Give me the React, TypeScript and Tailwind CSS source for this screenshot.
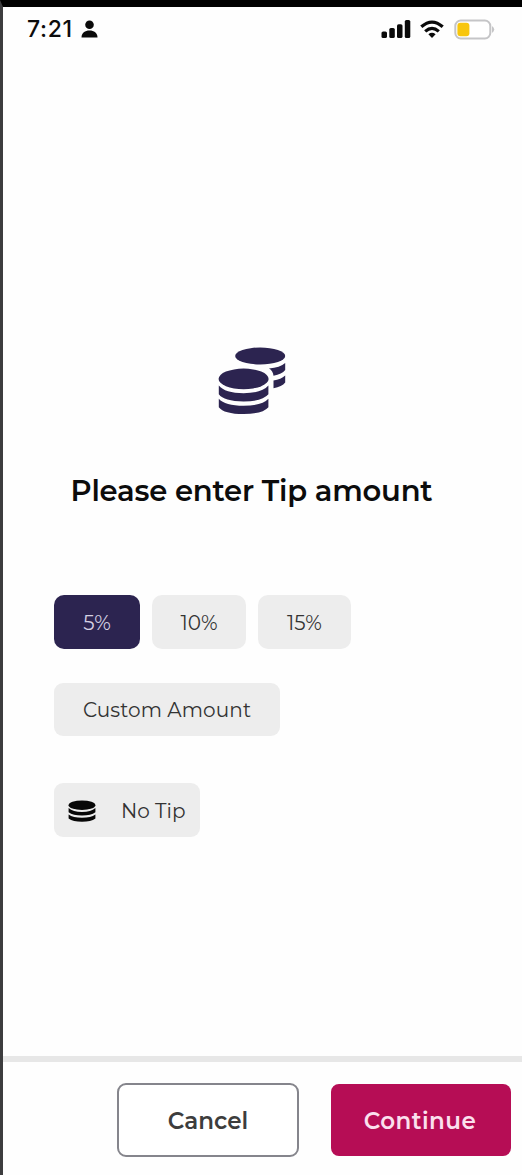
import { useState } from "react";

const CoinsIcon = () => (
  <svg viewBox="0 0 68 68" className="w-[68px] h-[68px]" fill="#2c2450">
    <ellipse cx="42.2" cy="9" rx="25" ry="8.5" />
    <path d="M51 21.6 Q62 20.6 67.2 16 V23 Q64 27.2 55.5 28.8 Q55 24 51 21.6Z" />
    <path d="M55.5 33.6 Q63 32.6 67.2 28.6 V35.5 Q64 39.6 55.5 41.2Z" />
    <ellipse cx="25.6" cy="31.9" rx="25" ry="10.3" />
    <path d="M0.8 38.6 Q7 46.2 25.6 46.2 Q44 46.2 50.4 38.6 V47.3 Q44.5 54.4 25.6 54.4 Q6 54.4 0.8 47.3Z" />
    <path d="M0.8 51.8 Q7 58.8 25.6 58.8 Q44 58.8 50.4 51.8 V60.2 Q44.5 67 25.6 67 Q6 67 0.8 60.2Z" />
  </svg>
);

const StackIcon = () => (
  <svg viewBox="0 0 28 22" className="w-7 h-[22px]" fill="#080808">
    <ellipse cx="14" cy="5.2" rx="13.4" ry="4.8" />
    <path d="M0.6 8 Q5 12 14 12 Q23 12 27.4 8 V12.2 Q23 15.5 14 15.5 Q5 15.5 0.6 12.2Z" />
    <path d="M0.6 14.6 Q5 17.8 14 17.8 Q23 17.8 27.4 14.6 V18.6 Q23 21.8 14 21.8 Q5 21.8 0.6 18.6Z" />
  </svg>
);

const StatusBar = () => (
  <div className="flex justify-between h-11 pl-6 pr-[26px] pt-[9px]">
    <div className="flex items-center h-[26px] gap-[7px]">
      <span className="font-['Inter',sans-serif] text-[23px] leading-[26px] font-medium tracking-[0.7px] w-[47px] whitespace-nowrap">7:21</span>
      <svg viewBox="0 0 17 18" className="w-[17px] h-[18px]" fill="#0a0a0a">
        <circle cx="8.5" cy="4.7" r="4.3" />
        <path d="M0.5 17.4 C0.5 12.8 4 10.5 8.5 10.5 S16.5 12.8 16.5 17.4Z" />
      </svg>
    </div>
    <div className="flex items-center h-[26px]">
      <svg viewBox="0 0 30 20" className="w-[30px] h-5" fill="#0a0a0a">
        <rect x="0.5" y="12.5" width="5.5" height="6.5" rx="1.6" />
        <rect x="8.3" y="9" width="5.5" height="10" rx="1.6" />
        <rect x="16" y="5.2" width="5.5" height="13.8" rx="1.6" />
        <rect x="23.8" y="1" width="5.5" height="18" rx="1.6" />
      </svg>
      <svg viewBox="0 0 24 18" className="w-6 h-[18px] ml-[9px]" fill="none" stroke="#0a0a0a" strokeWidth="3.2">
        <path d="M1.3 6.8 Q12 -2.6 22.7 6.8" />
        <path d="M5.2 11.4 Q12 5.4 18.8 11.4" />
        <path d="M12 18 L8.4 14.2 Q12 11.4 15.6 14.2Z" fill="#0a0a0a" stroke="none" />
      </svg>
      <svg viewBox="0 0 42 21" className="w-[42px] h-[21px] ml-2.5">
        <rect x="1.3" y="1.5" width="35" height="18" rx="5.5" fill="#fff" stroke="#c5c5c7" strokeWidth="2" />
        <rect x="3.4" y="3.8" width="12" height="13.4" rx="3" fill="#f8c60d" />
        <path d="M38 7 Q42.5 10.5 38 14Z" fill="#c5c5c7" />
      </svg>
    </div>
  </div>
);

const tips = [
  { label: "5%", width: "w-[86px]" },
  { label: "10%", width: "w-[94px]" },
  { label: "15%", width: "w-[93px]" },
];

export default function App() {
  const [selected, setSelected] = useState("5%");

  const chipColor = (label: string) =>
    selected === label ? "bg-[#2c2450] text-[#d5d1e3]" : "bg-[#ededed] text-[#333333]";

  return (
    <div className="flex flex-col w-[522px] h-[1175px] overflow-hidden bg-[#fefefe] border-t-[7px] border-t-black border-l-[3px] border-l-[#3c3c3e] font-['Montserrat','Inter',sans-serif] text-[#0c0c0c]">
      <StatusBar />

      <main className="flex flex-col h-[1005px] pt-[296px]">
        <div className="flex flex-col items-center pr-[22px]">
          <CoinsIcon />
          <h1 className="mt-[57px] text-[29px] leading-[38px] font-semibold tracking-[-0.18px] whitespace-nowrap">Please enter Tip amount</h1>
        </div>

        <div className="flex flex-col items-start mt-[85px] pl-[51px] text-[20px]">
          <div className="flex gap-3">
            {tips.map((tip) => (
              <button
                key={tip.label}
                onClick={() => setSelected(tip.label)}
                className={`${tip.width} h-[54px] pt-0.5 rounded-[10px] ${chipColor(tip.label)}`}
              >
                {tip.label}
              </button>
            ))}
          </div>
          <button
            onClick={() => setSelected("custom")}
            className={`mt-[34px] w-[226px] h-[53px] rounded-[9px] tracking-[0.1px] whitespace-nowrap ${chipColor("custom")}`}
          >
            Custom Amount
          </button>
          <button
            onClick={() => setSelected("none")}
            className={`flex items-center mt-[47px] w-[146px] h-[54px] pt-px pl-3.5 gap-[25px] rounded-[9px] whitespace-nowrap ${chipColor("none")}`}
          >
            <StackIcon />
            No Tip
          </button>
        </div>
      </main>

      <footer className="flex items-start justify-end gap-8 h-[119px] pt-[21px] pr-[11px] border-t-[6px] border-[#e7e7e7] text-[23px] font-semibold">
        <button className="w-[182px] h-[74px] pt-0.5 rounded-[9px] border-2 border-[#85858c] bg-white text-[#3d3d3d]">Cancel</button>
        <button className="w-[180px] h-[72px] mt-px pt-0.5 pr-0.5 rounded-[8px] bg-[#b60d55] text-[#fbe0ee] tracking-[0.45px]">Continue</button>
      </footer>
    </div>
  );
}
